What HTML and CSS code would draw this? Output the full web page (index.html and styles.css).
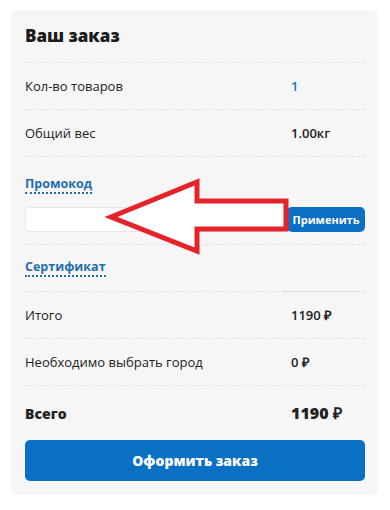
FILE: index.html
```html
<!DOCTYPE html>
<html lang="ru">
<head>
<meta charset="utf-8">
<link rel="stylesheet" href="styles.css">
</head>
<body>
<div class="card">
  <h2 class="title">Ваш заказ</h2>
  <div class="row"><span class="label">Кол-во товаров</span><span class="value link-val">1</span></div>
  <div class="row"><span class="label">Общий вес</span><span class="value strong">1.00кг</span></div>
  <div class="promo">
    <span class="dotlink">Промокод</span>
    <div class="promo-form">
      <div class="input"></div>
      <div class="apply">Применить</div>
    </div>
  </div>
  <div class="row cert"><span class="dotlink">Сертификат</span></div>
  <div class="row subtotal"><span class="label">Итого</span><span class="value strong">1190 ₽</span></div>
  <div class="row"><span class="label">Необходимо выбрать город</span><span class="value strong">0 ₽</span></div>
  <div class="row total"><span class="label">Всего</span><span class="value">1190 ₽</span></div>
  <div class="checkout">Оформить заказ</div>
  <svg class="arrow" width="200" height="90" viewBox="0 0 200 90">
    <polygon points="11,47 97,12 97,31 186,31 186,59 97,59 97,81" fill="#fff" stroke="#e4232b" stroke-width="5" stroke-linejoin="miter"/>
  </svg>
</div>
</body>
</html>
```
FILE: styles.css
```css
* { box-sizing: border-box; }
body {
  margin: 0;
  background: #fff;
  font-family: "Open Sans", "Liberation Sans", sans-serif;
  color: #222;
}
.card {
  position: relative;
  margin: 10px 0 0 11px;
  width: 367px;
  height: 485px;
  background: #f6f6f6;
  border-radius: 6px;
  padding: 14px 13px 0 14px;
}
.title {
  margin: 0;
  font-size: 17px;
  font-weight: 800;
  line-height: 24px;
  height: 38px;
  color: #1c1c1c;
}
.row {
  display: grid;
  grid-template-columns: 266px 1fr;
  align-items: center;
  height: 47px;
  border-top: 1px dashed #e0e0e0;
  font-size: 13px;
}
.subtotal {
  background: linear-gradient(#cdd6de, #cdd6de) no-repeat 258px -1px / 77px 1px;
}
.value { font-weight: 600; }
.link-val { color: #1e74bb; }
.strong { font-weight: 600; }
.promo {
  border-top: 1px dashed #e0e0e0;
  padding-top: 14px;
  height: 88px;
}
.dotlink {
  display: inline-block;
  font-size: 12.5px;
  font-weight: 700;
  color: #1e6fb0;
  border-bottom: 2px dotted #1e6fb0;
  line-height: 16px;
}
.promo-form {
  display: flex;
  margin-top: 13px;
  height: 25px;
}
.input {
  flex: 1;
  background: #fff;
  border: 1px solid #e6e6e6;
  border-radius: 4px;
}
.apply {
  width: 78px;
  background: #0a70c3;
  color: #fff;
  border-radius: 5px;
  font-size: 11px;
  font-weight: 700;
  display: flex;
  align-items: center;
  justify-content: center;
}
.cert { display: flex; }
.total { font-weight: 800; font-size: 14px; height: 55px; }
.total .value { font-size: 16px; font-weight: 800; }
.checkout {
  height: 41px;
  background: #0a70c3;
  color: #fff;
  border-radius: 5px;
  display: flex;
  align-items: center;
  justify-content: center;
  font-size: 14px;
  font-weight: 800;
}
.arrow {
  position: absolute;
  left: 89px;
  top: 160px;
}
```
